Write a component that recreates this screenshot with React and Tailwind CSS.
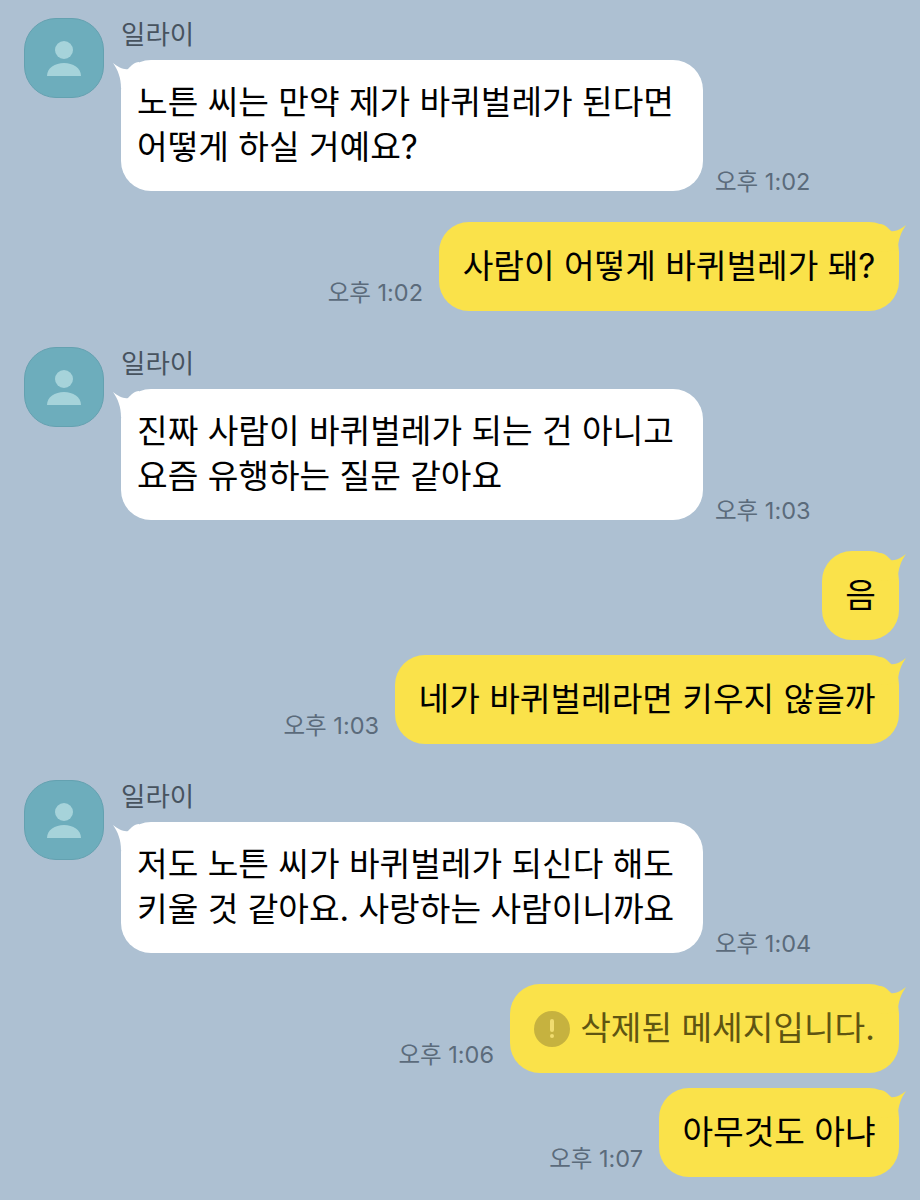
const Avatar = () => (
  <div className="w-20 h-20 shrink-0 rounded-[32px] bg-[#6dadbc] border border-[#64a1b0] flex items-center justify-center">
    <svg width="36" height="36" viewBox="0 0 36 36" fill="#a6d3da">
      <circle cx="18" cy="10" r="9" />
      <path d="M1 36 C1 28 9 23 18 23 C27 23 35 28 35 36 Z" />
    </svg>
  </div>
);

const TailLeft = () => (
  <svg className="absolute left-[-8px] top-[2px]" width="26" height="28" viewBox="0 0 26 28" fill="#ffffff">
    <path d="M0 1 C5 5 11 8 15 7 C18 4 21 0 26 0 L26 28 L8 26 C8 16 5 8 0 1 Z" />
  </svg>
);

const TailRight = () => (
  <svg className="absolute right-[-7px] top-[2px]" width="26" height="28" viewBox="0 0 26 28" fill="#fae24a">
    <path d="M26 1 C21 5 15 8 11 7 C8 4 5 0 0 0 L0 28 L18 26 C18 16 21 8 26 1 Z" />
  </svg>
);

const Time = ({ children, className }) => (
  <span className={`text-[23.5px] leading-[30px] text-[#5b6b7b] whitespace-nowrap ${className}`}>{children}</span>
);

const Incoming = ({ lines, time }) => (
  <div className="flex pl-6 gap-[17px]">
    <Avatar />
    <div className="flex flex-col">
      <div className="text-[26.5px] leading-[32px] text-[#47535f] h-[42px]">일라이</div>
      <div className="flex items-end">
        <div className="relative w-[582px] h-[131px] bg-white rounded-[30px] pl-4 pt-5 text-[33.3px] leading-[45px] text-black whitespace-nowrap">
          <TailLeft />
          <div className="relative">
            {lines.map((l) => (
              <div key={l}>{l}</div>
            ))}
          </div>
        </div>
        <Time className="ml-3 mb-[-6px]">{time}</Time>
      </div>
    </div>
  </div>
);

const Outgoing = ({ children, time, width }) => (
  <div className="flex justify-end items-end pr-[21px]">
    <Time className="mr-4 mb-[3px]">{time}</Time>
    <div
      className="relative h-[89px] bg-[#fae24a] rounded-[30px] flex items-center justify-center text-[33.3px] text-black whitespace-nowrap"
      style={{ width }}
    >
      <TailRight />
      <div className="relative flex items-center">{children}</div>
    </div>
  </div>
);

export default function App() {
  return (
    <div
      className="w-[920px] h-[1200px] bg-[#adc0d2] overflow-hidden pt-[18px] flex flex-col"
      style={{ fontFamily: 'Inter, "Noto Sans CJK KR", sans-serif' }}
    >
      <Incoming lines={['노튼 씨는 만약 제가 바퀴벌레가 된다면', '어떻게 하실 거예요?']} time="오후 1:02" />
      <div className="mt-[31px]">
        <Outgoing time="오후 1:02" width={460}>사람이 어떻게 바퀴벌레가 돼?</Outgoing>
      </div>
      <div className="mt-9">
        <Incoming lines={['진짜 사람이 바퀴벌레가 되는 건 아니고', '요즘 유행하는 질문 같아요']} time="오후 1:03" />
      </div>
      <div className="mt-[31px] flex flex-col gap-[15px]">
        <Outgoing width={77}>음</Outgoing>
        <Outgoing time="오후 1:03" width={504}>네가 바퀴벌레라면 키우지 않을까</Outgoing>
      </div>
      <div className="mt-9">
        <Incoming lines={['저도 노튼 씨가 바퀴벌레가 되신다 해도', '키울 것 같아요. 사랑하는 사람이니까요']} time="오후 1:04" />
      </div>
      <div className="mt-[31px] flex flex-col gap-[15px]">
        <Outgoing time="오후 1:06" width={389}>
          <span className="w-9 h-9 mr-[10px] rounded-full bg-[#c6b23f] flex flex-col items-center justify-center gap-[2px]">
            <span className="w-[4px] h-[13px] rounded-full bg-[#f0dc70]" />
            <span className="w-[4px] h-[4px] rounded-full bg-[#f0dc70]" />
          </span>
          <span className="text-[#5f5512]">삭제된 메세지입니다.</span>
        </Outgoing>
        <Outgoing time="오후 1:07" width={240}>아무것도 아냐</Outgoing>
      </div>
    </div>
  );
}
